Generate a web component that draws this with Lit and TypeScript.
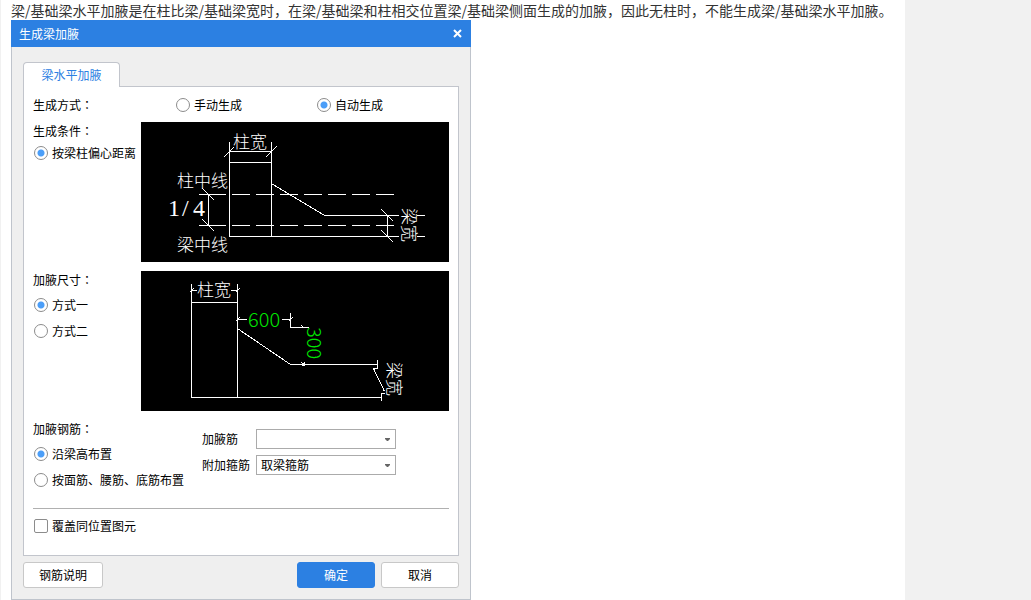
import { LitElement, html, css } from "lit";
import { customElement } from "lit/decorators.js";

@customElement("column-offset-diagram")
class ColumnOffsetDiagram extends LitElement {
  static styles = css`
    :host { display: block; }
    svg { display: block; width: 100%; height: auto; background: #000; }
    .lines { fill: none; stroke: #fff; stroke-width: 1; shape-rendering: crispEdges; }
    .cad { fill: #fff; font: 300 17px "Noto Sans CJK SC", sans-serif; }
    .ratio { fill: #fff; font: 24px "Liberation Serif", serif; }
  `;

  render() {
    return html`
      <svg viewBox="0 0 308 140" role="img" aria-label="按梁柱偏心距离">
        <g class="lines">
          <path d="M88.5 20V114.5M130.5 20V114.5M88 40.5H131M88 29.5H131" />
          <path d="M82.5 35.5L92.5 25.5M124.5 35.5L135.5 24.5" />
          <path d="M58 72.5H85M58 103.5H85M67.5 72V104" />
          <path d="M61.5 66.5L73.5 78.5M61.5 97.5L73.5 109.5" />
          <path stroke-dasharray="18 6" d="M91 72.5H254M91 103.5H254" />
          <path d="M130.5 61.5L183.5 93.5H258M88 114.5H258M276 93.5H284M276 114.5H284" />
          <path d="M246.5 93V115M240.5 87.5L252.5 99.5M240.5 108.5L252.5 120.5" />
        </g>
        <text class="cad" x="92" y="26">柱宽</text>
        <text class="cad" x="36" y="65">柱中线</text>
        <text class="cad" x="36" y="129">梁中线</text>
        <text class="ratio" x="27 41 52" y="94">1/4</text>
        <text class="cad" transform="translate(262 86) rotate(90)">梁宽</text>
      </svg>
    `;
  }
}

@customElement("haunch-size-diagram")
class HaunchSizeDiagram extends LitElement {
  static styles = css`
    :host { display: block; }
    svg { display: block; width: 100%; height: auto; background: #000; }
    .lines { fill: none; stroke: #fff; stroke-width: 1; shape-rendering: crispEdges; }
    .cad { fill: #fff; font: 300 17px "Noto Sans CJK SC", sans-serif; }
    .size { fill: #00e600; font: 300 20px "Noto Sans CJK SC", sans-serif; }
  `;

  render() {
    return html`
      <svg viewBox="0 0 308 140" role="img" aria-label="加腋尺寸">
        <g class="lines">
          <path d="M50.5 13V126.5M96.5 13V126.5M50 31.5H97M50 19.5H56M90 19.5H97" />
          <path d="M48.5 21.5L52.5 17.5M94.5 21.5L98.5 17.5" />
          <path d="M96 48.5H106M141 48.5H150M94.5 50.5L98.5 46.5M147.5 50.5L151.5 46.5" />
          <path d="M149.5 42V56.5H168M160.5 54.5L163.5 57.5" />
          <path d="M96.5 57.5L149.5 93.5H236.5M160.5 91.5L164.5 95.5M161.5 95.5L163.5 91.5" />
          <path d="M236.5 89V97.5H232.5L243.5 120.5M244 122.5H240.5V130M50 126.5H240" />
        </g>
        <text class="cad" x="56" y="25">柱宽</text>
        <text class="size" x="107" y="56">600</text>
        <text class="size" transform="translate(166 56) rotate(90)">300</text>
        <text class="cad" transform="translate(247 91) rotate(90)">梁宽</text>
      </svg>
    `;
  }
}

@customElement("app-root")
class AppRoot extends LitElement {
  static styles = css`
    :host {
      display: block;
      font: 12px/18px "Noto Sans CJK SC", sans-serif;
      color: #000;
    }
    * { box-sizing: border-box; }
    .page {
      display: grid;
      grid-template-columns: minmax(0, 1fr) 126px;
      min-height: 100vh;
      background: #f1f1f1;
    }
    .article {
      background: #fff;
      border-left: 1px solid #f1f1f1;
      padding-left: 10px;
    }
    .intro {
      margin: 0;
      font-size: 14px;
      line-height: 20px;
      color: #333;
    }
    .dialog {
      width: 460px;
      max-width: 100%;
      background: #efefef;
    }
    .titlebar {
      display: flex;
      align-items: center;
      justify-content: space-between;
      height: 27px;
      padding: 0 8px;
      background: #2c80e2;
      color: #fff;
    }
    .title { margin: 0; font: inherit; }
    .close {
      display: flex;
      padding: 0;
      border: 0;
      background: none;
      color: #fff;
    }
    .body {
      border: 1px solid #bfc4cc;
      border-top: 0;
      padding: 15px 11px 11px;
    }
    .tab {
      display: block;
      position: relative;
      width: 97px;
      height: 25px;
      margin-bottom: -1px;
      padding: 0;
      border: 1px solid #c2c5cc;
      border-bottom: 0;
      border-radius: 4px 4px 0 0;
      background: #fff;
      color: #2c80e2;
      font: inherit;
    }
    .panel {
      border: 1px solid #c2c5cc;
      padding: 0 9px 16px;
      background: #fff;
    }
    .colon { font-family: "Noto Sans CJK TC", sans-serif; }
    .heading { margin: 0; font: inherit; }
    .mode {
      display: grid;
      grid-template-columns: 142px 141px 1fr;
      align-items: center;
      height: 35px;
    }
    .section {
      display: grid;
      grid-template-columns: 108px minmax(0, 308px);
      margin-bottom: 9px;
    }
    .options {
      display: grid;
      align-content: start;
      white-space: nowrap;
    }
    .options.spaced .heading { margin-bottom: 3px; }
    .choice {
      display: flex;
      align-items: center;
      gap: 4px;
      height: 26px;
      padding-left: 1px;
    }
    .choice input {
      appearance: none;
      flex: none;
      width: 14px;
      height: 14px;
      margin: 0;
      border: 1px solid #8c8c8c;
      background: #fff;
    }
    .choice input[type="radio"] { border-radius: 50%; }
    .choice input[type="radio"]:checked {
      background: radial-gradient(circle, #4b9ef8 0 2px, #4b9ef8 3px, #fff 4px);
    }
    .choice input[type="checkbox"] { border-radius: 2px; }
    .rebar {
      display: grid;
      grid-template-columns: 169px 1fr;
      padding-bottom: 15px;
      border-bottom: 1px solid #b0b0b0;
      margin-bottom: 4px;
    }
    .fields {
      display: grid;
      grid-template-columns: 54px 140px;
      align-content: start;
      align-items: center;
      gap: 6px 0;
      padding-top: 9px;
      white-space: nowrap;
    }
    .picker { display: grid; align-items: center; }
    .picker > * { grid-area: 1 / 1; }
    .picker select {
      appearance: none;
      width: 100%;
      height: 20px;
      margin: 0;
      padding: 0 20px 0 4px;
      border: 1px solid #ababab;
      border-radius: 0;
      background: #fff;
      color: #000;
      font: inherit;
    }
    .arrow {
      justify-self: end;
      margin-right: 6px;
      pointer-events: none;
    }
    .footer {
      display: flex;
      gap: 6px;
      padding-top: 6px;
    }
    .button {
      width: 78px;
      height: 26px;
      padding: 0;
      border: 1px solid #c8c8c8;
      border-radius: 3px;
      background: #fff;
      color: #000;
      font: inherit;
    }
    .button.help { width: 80px; margin-right: auto; }
    .button.primary {
      border-color: #2c80e2;
      background: #2c80e2;
      color: #fff;
    }
  `;

  heading(text: string) {
    return html`<h3 class="heading">${text}<span class="colon">：</span></h3>`;
  }

  radio(group: string, text: string, checked = false) {
    return html`
      <label class="choice">
        <input type="radio" name=${group} .checked=${checked} />${text}
      </label>
    `;
  }

  arrow() {
    return html`
      <svg class="arrow" width="5" height="3" viewBox="0 0 5 3" aria-hidden="true">
        <path d="M0 0H5V1L3 3H2L0 1Z" fill="#666" />
      </svg>
    `;
  }

  render() {
    return html`
      <div class="page">
        <main class="article">
          <p class="intro">梁/基础梁水平加腋是在柱比梁/基础梁宽时，在梁/基础梁和柱相交位置梁/基础梁侧面生成的加腋，因此无柱时，不能生成梁/基础梁水平加腋。</p>
          <section class="dialog" role="dialog" aria-labelledby="title">
            <header class="titlebar">
              <h2 class="title" id="title">生成梁加腋</h2>
              <button class="close" type="button" aria-label="关闭">
                <svg width="11" height="9" viewBox="0 0 11 9" aria-hidden="true">
                  <path d="M2 1L9 8M9 1L2 8" fill="none" stroke="currentColor" stroke-width="2" />
                </svg>
              </button>
            </header>
            <div class="body">
              <button class="tab" type="button">梁水平加腋</button>
              <div class="panel">
                <div class="mode">
                  ${this.heading("生成方式")}
                  ${this.radio("mode", "手动生成")}
                  ${this.radio("mode", "自动生成", true)}
                </div>
                <div class="section">
                  <div class="options">
                    ${this.heading("生成条件")}
                    ${this.radio("condition", "按梁柱偏心距离", true)}
                  </div>
                  <column-offset-diagram></column-offset-diagram>
                </div>
                <div class="section">
                  <div class="options spaced">
                    ${this.heading("加腋尺寸")}
                    ${this.radio("size", "方式一", true)}
                    ${this.radio("size", "方式二")}
                  </div>
                  <haunch-size-diagram></haunch-size-diagram>
                </div>
                <div class="rebar">
                  <div class="options spaced">
                    ${this.heading("加腋钢筋")}
                    ${this.radio("layout", "沿梁高布置", true)}
                    ${this.radio("layout", "按面筋、腰筋、底筋布置")}
                  </div>
                  <div class="fields">
                    <label for="haunch-bar">加腋筋</label>
                    <div class="picker">
                      <select id="haunch-bar"><option></option></select>
                      ${this.arrow()}
                    </div>
                    <label for="stirrup">附加箍筋</label>
                    <div class="picker">
                      <select id="stirrup"><option>取梁箍筋</option></select>
                      ${this.arrow()}
                    </div>
                  </div>
                </div>
                <label class="choice"><input type="checkbox" />覆盖同位置图元</label>
              </div>
              <footer class="footer">
                <button class="button help" type="button">钢筋说明</button>
                <button class="button primary" type="button">确定</button>
                <button class="button" type="button">取消</button>
              </footer>
            </div>
          </section>
        </main>
      </div>
    `;
  }
}
